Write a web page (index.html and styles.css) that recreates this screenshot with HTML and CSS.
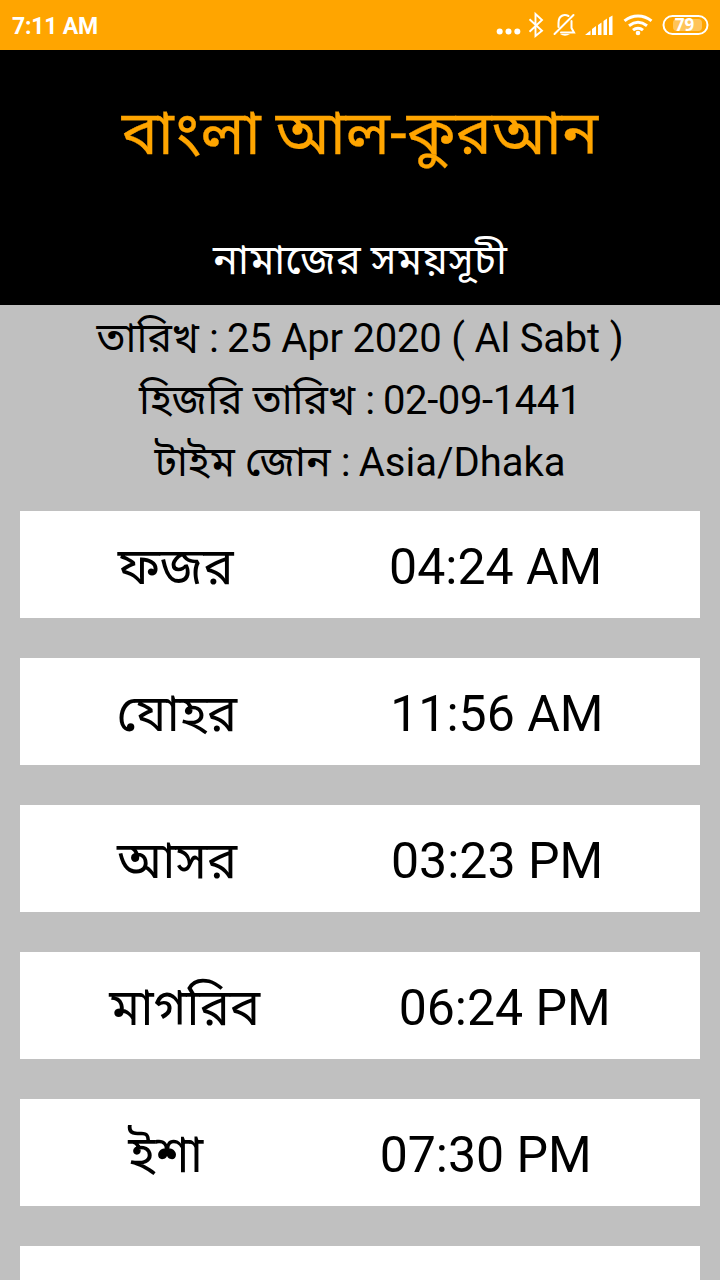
FILE: index.html
```html
<!DOCTYPE html>
<html lang="bn">
<head>
<meta charset="utf-8">
<title>বাংলা আল-কুরআন</title>
<link rel="stylesheet" href="styles.css">
</head>
<body>
<header class="status">
  <span class="clock">7:11 AM</span>
  <svg class="status-icons" width="222" height="50" viewBox="490 0 222 50" fill="none" stroke="#fff">
    <g fill="#fff" stroke="none"><circle cx="499.700" cy="31.400" r="3"/><circle cx="508.500" cy="31.400" r="3"/><circle cx="517.300" cy="31.400" r="3"/></g>
    <path stroke-width="1.900" d="M529.500 19.300L542 30.700 535.500 36V14L542 20 529.500 31.700"/>
    <path stroke-width="2" stroke-linecap="round" d="M558.500 27v-4c0-8 6-9 10-7M571.500 21v7l2.500 4.500H561M554.500 34L573.500 15"/>
    <path d="M560 34h10q-5 3.500-10 0z" fill="#fff" stroke="none"/>
    <path fill="#fff" stroke="none" d="M585 35l5.500-4.500V35zM592 35v-6l4-3v9zM598 35V25l3.500-2.500V35zM603.500 35V21l3.500-2.500V35zM609 35V17.500l3.500-2V35z"/>
    <path stroke-width="3" d="M624.500 20.800c8-6.500 19-6.500 27 0M629 25.700c6-4.500 12-4.500 18 0M633 30.200c3-2.500 7-2.500 10 0"/>
    <circle cx="638" cy="33" r="2.300" fill="#fff" stroke="none"/>
    <rect x="673" y="19" width="29" height="12" rx="4" fill="#fff" fill-opacity=".35" stroke="none"/>
    <rect x="663.500" y="16" width="44" height="18" rx="9" stroke-width="2"/>
  </svg>
  <span class="battery">79</span>
</header>
<section class="hero">
  <h1 class="title">বাংলা আল-কুরআন</h1>
  <h2 class="subtitle">নামাজের সময়সূচী</h2>
</section>
<section class="info">
  <p><span class="label">তারিখ :</span> <span class="value date">25 Apr 2020 ( Al Sabt )</span></p>
  <p><span class="label">হিজরি তারিখ :</span> <span class="value hijri">02-09-1441</span></p>
  <p><span class="label">টাইম জোন :</span> <span class="value">Asia/Dhaka</span></p>
</section>
<main class="list">
  <div class="row"><span class="name">ফজর</span><span class="time">04:24 AM</span></div>
  <div class="row"><span class="name">যোহর</span><span class="time">11:56 AM</span></div>
  <div class="row"><span class="name">আসর</span><span class="time">03:23 PM</span></div>
  <div class="row"><span class="name">মাগরিব</span><span class="time">06:24 PM</span></div>
  <div class="row"><span class="name">ইশা</span><span class="time">07:30 PM</span></div>
  <div class="row cut"></div>
</main>
</body>
</html>
```
FILE: styles.css
```css
* { box-sizing: border-box; margin: 0; padding: 0; }
body { width: 720px; height: 1280px; overflow: hidden; background: #c0c0c0; color: #000; font-family: Roboto, "Noto Sans Bengali", "Noto Sans", sans-serif; }
.status { position: relative; height: 50px; padding: 0 8px 0 12px; display: flex; align-items: center; justify-content: space-between; background: #ffa500; color: #fff; }
.clock { padding-top: 3px; font: 700 23px/46px Roboto, sans-serif; letter-spacing: -0.2px; }
.battery { position: absolute; right: 13px; top: 15px; width: 45px; text-align: center; font: 700 17px/20px "Open Sans", sans-serif; }
.hero { height: 255px; background: #000; text-align: center; }
.title { height: 170px; font-size: 60.5px; line-height: 168px; font-weight: 400; color: #ffa500; -webkit-text-stroke: 0.3px #ffa500; }
.subtitle { height: 85px; font-size: 41.4px; line-height: 81px; font-weight: 400; color: #fff; }
.info { height: 206px; padding-top: 3px; text-align: center; font-size: 40px; line-height: 62px; white-space: nowrap; }
.label { font-size: 41px; line-height: 1; }
.value { margin-left: -2px; }
.date { letter-spacing: -0.2px; }
.hijri { letter-spacing: -0.4px; }
.list { display: flex; flex-direction: column; gap: 40px; padding: 0 20px; }
.row { flex: none; height: 107px; padding: 4px 20px 0; display: flex; align-items: center; justify-content: space-around; background: #fff; font-size: 50px; line-height: 100px; white-space: nowrap; }
.name { font-size: 50.6px; }
.cut { height: 34px; }
```
